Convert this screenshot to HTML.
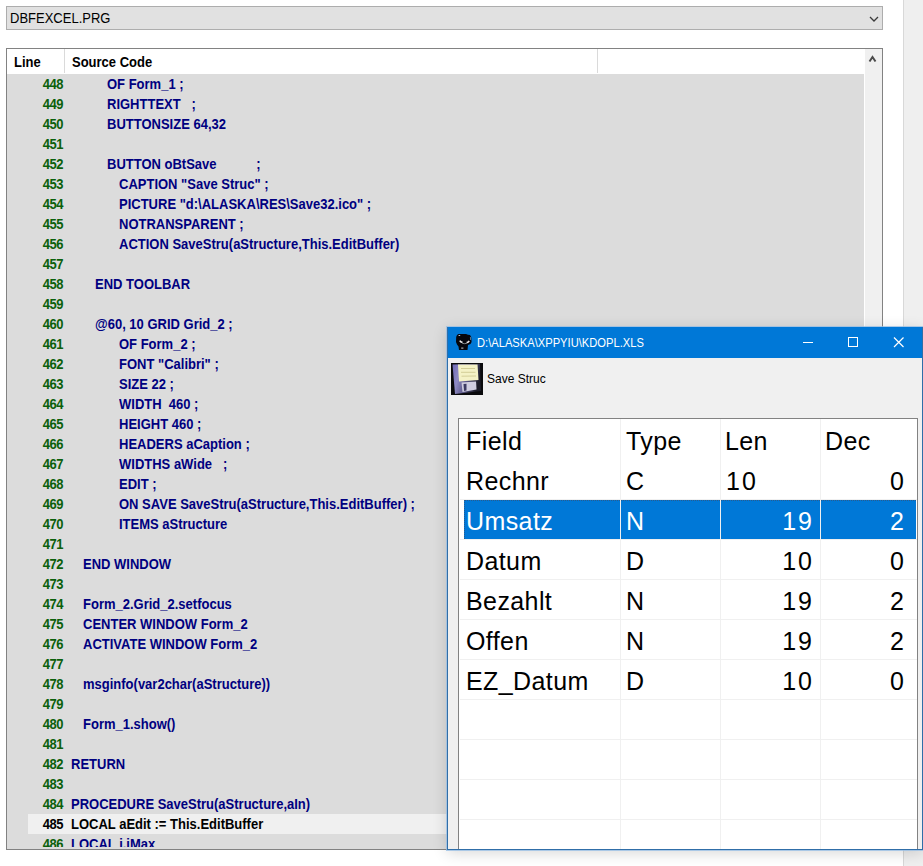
<!DOCTYPE html>
<html><head><meta charset="utf-8">
<style>
html,body{margin:0;padding:0;}
body{width:923px;height:866px;position:relative;overflow:hidden;background:#fff;font-family:"Liberation Sans",sans-serif;}
#rstrip{position:absolute;left:903px;top:0;width:20px;height:866px;background:#efefef;border-left:1px solid #d8d8d8;box-sizing:border-box;}
#combo{position:absolute;left:6px;top:6px;width:877px;height:24px;box-sizing:border-box;border:1px solid #adadad;background:#e1e1e1;}
#combo .t{position:absolute;left:3px;top:3px;transform:scaleY(1.1);transform-origin:0 0;font-size:13px;color:#000;}
#combo svg{position:absolute;left:862px;top:8px;}
#lb{position:absolute;left:6px;top:48px;width:877px;height:802px;box-sizing:border-box;border:1px solid #828282;background:#fff;overflow:hidden;}
#hdr{position:absolute;left:0;top:0;width:858px;height:25px;background:#fff;}
#hdr .h{position:absolute;top:5px;transform:scaleY(1.1);transform-origin:0 0;font-size:13px;font-weight:bold;color:#000;}
#hdr .sep{position:absolute;top:0;width:1px;height:24px;background:#dadada;}
#code{position:absolute;left:0;top:25px;width:857px;height:773px;background:#dcdcdc;overflow:hidden;}
#codeb{position:absolute;left:0;top:798px;width:857px;height:4px;background:#dcdcdc;}
#vs{position:absolute;left:858px;top:0;width:17px;height:800px;background:#f0f0f0;}
.r{position:absolute;left:0;width:857px;height:20px;}
.r.sel .hl{position:absolute;left:21px;top:0;width:840px;height:20px;background:#f0f0f0;}
.ln{position:absolute;left:-7px;width:63px;text-align:right;top:2px;transform:scaleY(1.1);transform-origin:0 0;font-size:13px;font-weight:bold;color:#0b600b;letter-spacing:-0.5px;}
.cd{position:absolute;top:2px;transform:scaleY(1.1);transform-origin:0 0;font-size:13px;font-weight:bold;color:#000080;white-space:pre;margin-left:-7px;}
.sel .ln,.sel .cd{color:#000;}
#shadow{position:absolute;left:447px;top:327px;width:476px;height:523px;box-shadow:0 0 0 1px rgba(150,190,230,0.75), 0 3px 14px rgba(0,0,0,0.16);}
#win{position:absolute;left:447px;top:327px;width:476px;height:523px;box-sizing:border-box;border:1px solid #306ea8;border-top:none;background:#f0f0f0;overflow:hidden;}
#title{position:absolute;left:-1px;top:0;width:476px;height:31px;background:#0078d7;}
#title .t{position:absolute;left:30px;top:9px;font-size:12px;color:#fff;transform:scaleX(0.93);transform-origin:0 0;}
#grid{position:absolute;left:10px;top:91px;width:460px;height:440px;box-sizing:border-box;border:1px solid #828282;border-bottom:none;background:#fff;overflow:hidden;}
.gr{position:absolute;left:0;width:458px;height:40px;}
.gc{position:absolute;top:8px;font-size:25px;color:#000;line-height:28px;letter-spacing:0.4px;}
.c1{left:7px}.c2{left:167px}.c3{left:266px}.c4{left:366px}
.c3.rt{left:auto;right:103px}
.c3.num:not(.rt){left:267px}.c4.rt{left:auto;right:13px}
.num{letter-spacing:2px}
.c4.rt{letter-spacing:0}
.gsel .gc{color:#fff;}
.gsel .bg{position:absolute;left:5px;top:1px;width:452px;height:39px;background:#0078d7;box-sizing:border-box;border-top:1px dotted #2a5a8c;border-left:1px dotted #2a5a8c;}
.vl{position:absolute;top:0;width:1px;height:440px;background:#f0f0f0;}
.hl2{position:absolute;left:1px;width:457px;height:1px;background:#f0f0f0;}
</style></head><body>
<div id="rstrip"></div>
<div id="combo"><span class="t">DBFEXCEL.PRG</span>
<svg width="10" height="8" viewBox="0 0 10 8"><path d="M1 2 L5 6 L9 2" fill="none" stroke="#3a3a3a" stroke-width="1.3"/></svg></div>
<div id="lb">
 <div id="hdr"><span class="h" style="left:7px">Line</span><div class="sep" style="left:57px"></div><span class="h" style="left:65px">Source Code</span><div class="sep" style="left:590px"></div></div>
 <div id="code">
<div class="r" style="top:0px"><span class="ln">448</span><span class="cd" style="left:107px">OF Form_1 ;</span></div>
<div class="r" style="top:20px"><span class="ln">449</span><span class="cd" style="left:107px">RIGHTTEXT   ;</span></div>
<div class="r" style="top:40px"><span class="ln">450</span><span class="cd" style="left:107px">BUTTONSIZE 64,32</span></div>
<div class="r" style="top:60px"><span class="ln">451</span><span class="cd" style="left:71px"></span></div>
<div class="r" style="top:80px"><span class="ln">452</span><span class="cd" style="left:107px">BUTTON oBtSave           ;</span></div>
<div class="r" style="top:100px"><span class="ln">453</span><span class="cd" style="left:119px">CAPTION "Save Struc" ;</span></div>
<div class="r" style="top:120px"><span class="ln">454</span><span class="cd" style="left:119px">PICTURE "d:\ALASKA\RES\Save32.ico" ;</span></div>
<div class="r" style="top:140px"><span class="ln">455</span><span class="cd" style="left:119px">NOTRANSPARENT ;</span></div>
<div class="r" style="top:160px"><span class="ln">456</span><span class="cd" style="left:119px">ACTION SaveStru(aStructure,This.EditBuffer)</span></div>
<div class="r" style="top:180px"><span class="ln">457</span><span class="cd" style="left:71px"></span></div>
<div class="r" style="top:200px"><span class="ln">458</span><span class="cd" style="left:95px">END TOOLBAR</span></div>
<div class="r" style="top:220px"><span class="ln">459</span><span class="cd" style="left:71px"></span></div>
<div class="r" style="top:240px"><span class="ln">460</span><span class="cd" style="left:95px">@60, 10 GRID Grid_2 ;</span></div>
<div class="r" style="top:260px"><span class="ln">461</span><span class="cd" style="left:119px">OF Form_2 ;</span></div>
<div class="r" style="top:280px"><span class="ln">462</span><span class="cd" style="left:119px">FONT "Calibri" ;</span></div>
<div class="r" style="top:300px"><span class="ln">463</span><span class="cd" style="left:119px">SIZE 22 ;</span></div>
<div class="r" style="top:320px"><span class="ln">464</span><span class="cd" style="left:119px">WIDTH  460 ;</span></div>
<div class="r" style="top:340px"><span class="ln">465</span><span class="cd" style="left:119px">HEIGHT 460 ;</span></div>
<div class="r" style="top:360px"><span class="ln">466</span><span class="cd" style="left:119px">HEADERS aCaption ;</span></div>
<div class="r" style="top:380px"><span class="ln">467</span><span class="cd" style="left:119px">WIDTHS aWide   ;</span></div>
<div class="r" style="top:400px"><span class="ln">468</span><span class="cd" style="left:119px">EDIT ;</span></div>
<div class="r" style="top:420px"><span class="ln">469</span><span class="cd" style="left:119px">ON SAVE SaveStru(aStructure,This.EditBuffer) ;</span></div>
<div class="r" style="top:440px"><span class="ln">470</span><span class="cd" style="left:119px">ITEMS aStructure</span></div>
<div class="r" style="top:460px"><span class="ln">471</span><span class="cd" style="left:71px"></span></div>
<div class="r" style="top:480px"><span class="ln">472</span><span class="cd" style="left:83px">END WINDOW</span></div>
<div class="r" style="top:500px"><span class="ln">473</span><span class="cd" style="left:71px"></span></div>
<div class="r" style="top:520px"><span class="ln">474</span><span class="cd" style="left:83px">Form_2.Grid_2.setfocus</span></div>
<div class="r" style="top:540px"><span class="ln">475</span><span class="cd" style="left:83px">CENTER WINDOW Form_2</span></div>
<div class="r" style="top:560px"><span class="ln">476</span><span class="cd" style="left:83px">ACTIVATE WINDOW Form_2</span></div>
<div class="r" style="top:580px"><span class="ln">477</span><span class="cd" style="left:71px"></span></div>
<div class="r" style="top:600px"><span class="ln">478</span><span class="cd" style="left:83px">msginfo(var2char(aStructure))</span></div>
<div class="r" style="top:620px"><span class="ln">479</span><span class="cd" style="left:71px"></span></div>
<div class="r" style="top:640px"><span class="ln">480</span><span class="cd" style="left:83px">Form_1.show()</span></div>
<div class="r" style="top:660px"><span class="ln">481</span><span class="cd" style="left:71px"></span></div>
<div class="r" style="top:680px"><span class="ln">482</span><span class="cd" style="left:71px">RETURN</span></div>
<div class="r" style="top:700px"><span class="ln">483</span><span class="cd" style="left:71px"></span></div>
<div class="r" style="top:720px"><span class="ln">484</span><span class="cd" style="left:71px">PROCEDURE SaveStru(aStructure,aIn)</span></div>
<div class="r sel" style="top:740px"><div class="hl"></div><span class="ln">485</span><span class="cd" style="left:71px">LOCAL aEdit := This.EditBuffer</span></div>
<div class="r" style="top:760px"><span class="ln">486</span><span class="cd" style="left:71px">LOCAL i,iMax</span></div>
 </div>
 <div id="codeb"></div>
 <div id="vs"><svg style="position:absolute;left:3px;top:6px" width="9" height="8" viewBox="0 0 9 8"><path d="M1.5 6.5 L4.5 2 L7.5 6.5" fill="none" stroke="#4a4a4a" stroke-width="2"/></svg></div>
</div>
<div id="shadow"></div>
<div id="win">
 <div id="title">
  <svg style="position:absolute;left:9px;top:7px" width="16" height="16" viewBox="0 0 16 16">
<path d="M2.5 0 L10 0 L12 0.8 L14 1 L15.2 3 L15.6 8 L14.5 10 L12 11 L11.5 16 L3 16 L2.5 12.5 L1 10.5 L0 8 L0.2 3 L1 1 Z" fill="#06060c"/>
<path d="M3.8 6.6 Q4.6 8.2 6.5 8.4" fill="none" stroke="#f2f0f0" stroke-width="1.6"/>
<path d="M10.6 8.6 Q12.4 8.4 13.2 6.8" fill="none" stroke="#e8e2e2" stroke-width="1.6"/>
<path d="M6.2 9.3 Q8.5 10 10.8 9.3" fill="none" stroke="#8a9090" stroke-width="0.9"/>
<rect x="2.6" y="1" width="1.6" height="1" fill="#b8c4d8"/>
<rect x="5.2" y="13.6" width="2.2" height="1" fill="#c8c8c8"/>
<path d="M14.4 3 L14.6 6" stroke="#7a8aa0" stroke-width="0.8"/>
</svg>
  <span class="t">D:\ALASKA\XPPYIU\KDOPL.XLS</span>
  <div style="position:absolute;left:356px;top:15px;width:10px;height:1px;background:#fff"></div>
  <div style="position:absolute;left:401px;top:10px;width:10px;height:10px;box-sizing:border-box;border:1px solid #fff"></div>
  <svg style="position:absolute;left:446px;top:10px" width="11" height="11" viewBox="0 0 11 11"><path d="M1 0.5 L10.5 10 M10.5 0.5 L1 10" stroke="#fff" stroke-width="1.2"/></svg>
 </div>
 <div id="tb">
  <svg style="position:absolute;left:3px;top:36px" width="32" height="32" viewBox="0 0 32 32">
<defs><linearGradient id="bd" x1="0" y1="0" x2="1" y2="0.3">
<stop offset="0" stop-color="#6e68b4"/><stop offset="0.3" stop-color="#8e8ac4"/><stop offset="0.6" stop-color="#5c5888"/><stop offset="1" stop-color="#1c1c28"/></linearGradient></defs>
<rect x="0" y="0" width="32" height="32" fill="#0a0a0c"/>
<path d="M1.5 1.5 L29 1 L30 28 L4 31 Z" fill="url(#bd)"/>
<path d="M7 1.5 L26.5 1.5 L27.5 17 L8 18.5 Z" fill="#f4f2c6"/>
<path d="M10 5.5 L24 5.5 M10 9.3 L24.5 9.3 M10.5 13.2 L25 13" stroke="#cfca92" stroke-width="0.9"/>
<path d="M10.5 19.5 L25 18.5 L25.5 26.5 L11.5 29 Z" fill="#cfcde0"/>
<path d="M12.5 21 L15.5 20.8 L15.5 27.5 L13 28 Z" fill="#3c3a62"/>
</svg>
  <span style="position:absolute;left:39px;top:44px;font-size:12px;color:#000;transform:scaleY(1.08);transform-origin:0 0">Save Struc</span>
 </div>
 <div id="grid">
  <div class="hl2" style="top:80px"></div><div class="hl2" style="top:120px"></div><div class="hl2" style="top:160px"></div><div class="hl2" style="top:200px"></div><div class="hl2" style="top:240px"></div><div class="hl2" style="top:280px"></div><div class="hl2" style="top:320px"></div><div class="hl2" style="top:360px"></div><div class="hl2" style="top:400px"></div>
<div class="gr" style="top:0px"><span class="gc c1">Field</span><span class="gc c2">Type</span><span class="gc c3">Len</span><span class="gc c4">Dec</span></div>
<div class="gr" style="top:40px"><span class="gc c1">Rechnr</span><span class="gc c2">C</span><span class="gc c3 num">10</span><span class="gc c4 rt">0</span></div>
<div class="gr gsel" style="top:80px"><div class="bg"></div><span class="gc c1">Umsatz</span><span class="gc c2">N</span><span class="gc c3 rt num">19</span><span class="gc c4 rt">2</span></div>
<div class="gr" style="top:120px"><span class="gc c1">Datum</span><span class="gc c2">D</span><span class="gc c3 rt num">10</span><span class="gc c4 rt">0</span></div>
<div class="gr" style="top:160px"><span class="gc c1">Bezahlt</span><span class="gc c2">N</span><span class="gc c3 rt num">19</span><span class="gc c4 rt">2</span></div>
<div class="gr" style="top:200px"><span class="gc c1">Offen</span><span class="gc c2">N</span><span class="gc c3 rt num">19</span><span class="gc c4 rt">2</span></div>
<div class="gr" style="top:240px"><span class="gc c1">EZ_Datum</span><span class="gc c2">D</span><span class="gc c3 rt num">10</span><span class="gc c4 rt">0</span></div>
  <div class="vl" style="left:161px"></div><div class="vl" style="left:261px"></div><div class="vl" style="left:361px"></div>
 </div>
</div>
</body></html>
